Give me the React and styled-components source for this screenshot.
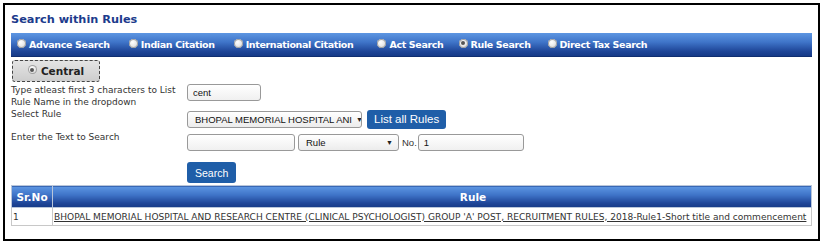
import React from "react";
import styled, { createGlobalStyle } from "styled-components";

const GlobalStyle = createGlobalStyle`
  body {
    margin: 3px;
    font-family: "DejaVu Sans", Verdana, sans-serif;
    background: #fff;
  }
`;

const navItems = [
  { label: "Advance Search", gap: 19 },
  { label: "Indian Citation", gap: 19 },
  { label: "International Citation", gap: 24 },
  { label: "Act Search", gap: 15 },
  { label: "Rule Search", gap: 17 },
  { label: "Direct Tax Search", gap: 0 },
];

const Radio = ({ checked }) => <RadioDot $checked={checked} />;

const App = () => {
  return (
    <Frame>
      <GlobalStyle />
      <Title>Search within Rules</Title>

      {/* search type bar */}
      <NavBar>
        {navItems.map((item) => (
          <NavItem key={item.label} $gap={item.gap}>
            <Radio checked={item.label === "Rule Search"} />
            {item.label}
          </NavItem>
        ))}
      </NavBar>

      <CentralTab>
        <Radio checked />
        Central
      </CentralTab>

      <Form>
        <Label>Type atleast first 3 characters to List Rule Name in the dropdown</Label>
        <Field $top>
          <TextBox $w={74} value="cent" readOnly />
        </Field>

        <Label>Select Rule</Label>
        <Field>
          <SelectBox $w={175}>
            <span>BHOPAL MEMORIAL HOSPITAL ANI</span>
            <Arrow>▼</Arrow>
          </SelectBox>
          <BlueButton>List all Rules</BlueButton>
        </Field>

        <Label>Enter the Text to Search</Label>
        <Field>
          <TextBox $w={108} value="" readOnly />
          <SelectBox $w={101}>
            <span>Rule</span>
            <Arrow>▼</Arrow>
          </SelectBox>
          <NoLabel>No.</NoLabel>
          <TextBox $w={106} value="1" readOnly />
        </Field>

        <span />
        <Field $top>
          <BlueButton $small>Search</BlueButton>
        </Field>
      </Form>

      <Table>
        <thead>
          <tr>
            <Th $w={36}>Sr.No</Th>
            <Th $shift={84}>Rule</Th>
          </tr>
        </thead>
        <tbody>
          <tr>
            <Td>1</Td>
            <Td>
              <RuleLink href="#">
                BHOPAL MEMORIAL HOSPITAL AND RESEARCH CENTRE (CLINICAL PSYCHOLOGIST) GROUP 'A' POST, RECRUITMENT RULES, 2018-Rule1-Short title and commencement
              </RuleLink>
            </Td>
          </tr>
        </tbody>
      </Table>
    </Frame>
  );
};

const Frame = styled.div`
  width: 801px;
  height: 234px;
  border: 2px solid #000;
  box-shadow: 1px 1px 0 #000;
  padding: 0 6px;
`;

const Title = styled.h2`
  margin: 0;
  padding: 8px 0 0;
  height: 20px;
  font-size: 11.3px;
  font-weight: bold;
  color: #1c3b8c;
`;

const NavBar = styled.div`
  display: flex;
  align-items: center;
  height: 23px;
  padding-left: 6px;
  background: linear-gradient(to bottom, #5d96e2 0%, #3f74c8 40%, #1e4597 80%, #163a87 100%);
  border-bottom: 1px solid #102e70;
`;

const NavItem = styled.label`
  display: flex;
  align-items: center;
  gap: 3px;
  margin-right: ${({ $gap }) => $gap}px;
  color: #fff;
  font-size: 9.5px;
  letter-spacing: -0.35px;
  font-weight: bold;
  white-space: nowrap;
`;

const RadioDot = styled.span`
  display: inline-block;
  width: 9px;
  height: 9px;
  border-radius: 50%;
  background: radial-gradient(circle at 40% 35%, #ffffff 0%, #e8e8e8 50%, #b8b8b8 100%);
  box-shadow: inset 0 0 0 1px #a0a0a0;
  position: relative;
  margin-top: -3px;

  &::after {
    content: "";
    display: ${({ $checked }) => ($checked ? "block" : "none")};
    position: absolute;
    left: 2.5px;
    top: 2.5px;
    width: 4px;
    height: 4px;
    border-radius: 50%;
    background: #555;
  }
`;

const CentralTab = styled.div`
  display: flex;
  align-items: center;
  justify-content: center;
  gap: 4px;
  width: 86px;
  height: 20px;
  margin: 3px 0 0 1px;
  border: 1px dashed #444;
  border-radius: 3px;
  background: linear-gradient(to bottom, #e4e4e4, #cdcdcd);
  font-size: 10.5px;
  font-weight: bold;
  color: #222;
`;

const Form = styled.div`
  display: grid;
  grid-template-columns: 176px 1fr;
  grid-template-rows: 24px 23px 24px 31px;
  margin-top: 1px;
`;

const Label = styled.div`
  font-size: 9px;
  line-height: 12px;
  color: #333;
  width: 166px;
  padding-top: 1px;
`;

const Field = styled.div`
  display: flex;
  align-items: ${({ $top }) => ($top ? "flex-start" : "center")};
  gap: 3px;
  padding-top: ${({ $top }) => ($top ? "1px" : "1px")};
`;

const TextBox = styled.input`
  width: ${({ $w }) => $w}px;
  height: 17px;
  box-sizing: border-box;
  border: 1px solid #999;
  border-radius: 3px;
  background: linear-gradient(to bottom, #fff, #f0f0f0);
  padding: 0 5px;
  font-family: "Liberation Sans", Arial, sans-serif;
  font-size: 9.5px;
  color: #111;
  outline: none;
`;

const SelectBox = styled.div`
  display: flex;
  align-items: center;
  justify-content: space-between;
  width: ${({ $w }) => $w}px;
  height: 17px;
  box-sizing: border-box;
  border: 1px solid #999;
  border-radius: 3px;
  background: linear-gradient(to bottom, #fff, #ececec);
  padding: 0 5px 0 7px;
  font-family: "Liberation Sans", Arial, sans-serif;
  font-size: 9.5px;
  color: #111;
  white-space: nowrap;
  overflow: hidden;
`;

const Arrow = styled.span`
  font-size: 7px;
  color: #222;
  margin-left: 4px;
`;

const NoLabel = styled.span`
  font-family: "Liberation Sans", Arial, sans-serif;
  font-size: 9.5px;
  color: #333;
  margin-right: -2px;
`;

const BlueButton = styled.button`
  height: ${({ $small }) => ($small ? "21px" : "19px")};
  padding: 0 ${({ $small }) => ($small ? "8px" : "7px")};
  margin-top: ${({ $small }) => ($small ? "7px" : "0")};
  margin-left: ${({ $small }) => ($small ? "0" : "2px")};
  border: none;
  border-radius: 3px;
  background: #1f5ea8;
  color: #fff;
  font-family: "Liberation Sans", Arial, sans-serif;
  font-size: ${({ $small }) => ($small ? "10.5px" : "11.5px")};
`;

const Table = styled.table`
  width: 801px;
  border-collapse: collapse;
`;

const Th = styled.th`
  width: ${({ $w }) => ($w ? `${$w}px` : "auto")};
  height: 21px;
  padding: 0 2px 0 ${({ $shift }) => ($shift ? `${$shift}px` : "2px")};
  background: linear-gradient(to bottom, #5d96e2 0%, #3f74c8 40%, #1e4597 80%, #163a87 100%);
  border: 1px solid #b9c6da;
  color: #fff;
  font-size: 10.5px;
  font-weight: bold;
  text-align: center;
`;

const Td = styled.td`
  height: 17px;
  padding: 0 1px;
  border: 1px solid #c8c8c8;
  font-size: 9.05px;
  color: #333;
  white-space: nowrap;
`;

const RuleLink = styled.a`
  color: #333;
  text-decoration: underline;
`;

export default App;
